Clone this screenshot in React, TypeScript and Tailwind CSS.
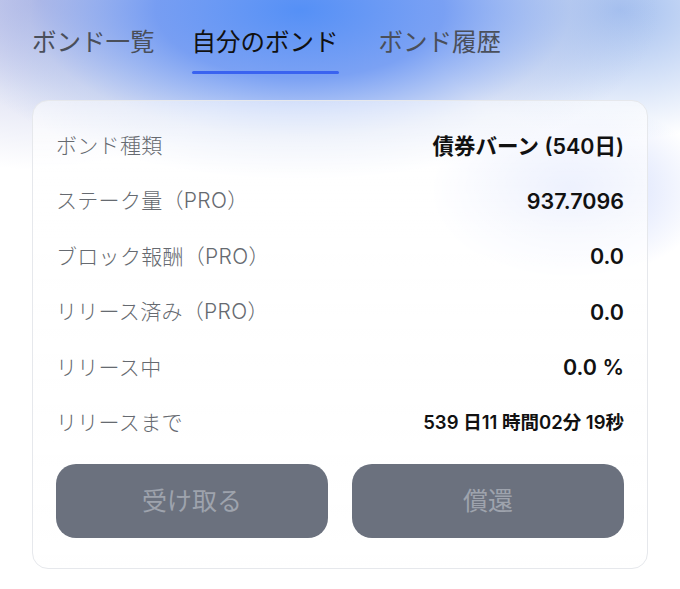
import React from "react";

const rows: { label: string; value: string; small?: boolean }[] = [
  { label: "ボンド種類", value: "債券バーン (540日)" },
  { label: "ステーク量（PRO）", value: "937.7096" },
  { label: "ブロック報酬（PRO）", value: "0.0" },
  { label: "リリース済み（PRO）", value: "0.0" },
  { label: "リリース中", value: "0.0 %" },
  { label: "リリースまで", value: "539 日11 時間02分 19秒", small: true },
];

export default function App() {
  return (
    <div
      className="w-[680px] h-[589px] overflow-hidden bg-white bg-[radial-gradient(ellipse_360px_170px_at_300px_10px,#5590f6_0%,rgba(100,145,242,0.85)_40%,rgba(170,190,235,0.45)_75%,rgba(255,255,255,0)_100%),radial-gradient(ellipse_230px_170px_at_40px_0px,#b4b6e4_0%,rgba(200,205,235,0.5)_55%,rgba(255,255,255,0)_100%),radial-gradient(ellipse_200px_130px_at_620px_10px,rgba(140,175,235,0.8)_0%,rgba(255,255,255,0)_100%),radial-gradient(ellipse_140px_90px_at_570px_190px,rgba(120,150,245,0.4)_0%,rgba(255,255,255,0)_100%)] flex flex-col"
      style={{ fontFamily: '"Inter", "Noto Sans CJK JP", sans-serif' }}
    >
      <div className="flex pl-[32px] pt-[22px] text-[24.5px] leading-[40px]">
        <div className="text-[#4a4f5a]">ボンド一覧</div>
        <div className="ml-[37px] flex flex-col items-stretch">
          <div className="text-[#111]">自分のボンド</div>
          <div className="mt-[9px] h-[3px] rounded-full bg-[#3a63f0]" />
        </div>
        <div className="ml-[40px] text-[#4a4f5a]">ボンド履歴</div>
      </div>
      <div className="mx-[32px] mt-[26px] rounded-[16px] border border-[#e6e8ec] bg-[linear-gradient(180deg,rgba(255,255,255,0.55)_0%,rgba(255,255,255,0.75)_30%,rgba(255,255,255,0.8)_100%)] px-[23px] pt-[17px] pb-[30px]">
        <div className="flex flex-col">
          {rows.map((r) => (
            <div key={r.label} className="flex items-center justify-between h-[55.4px]">
              <div className="text-[21px] text-[#666a70] font-light tracking-[0.3px]">{r.label}</div>
              <div
                className={
                  r.small
                    ? "text-[18.5px] font-semibold text-[#111]"
                    : "text-[21.5px] font-semibold text-[#111]"
                }
              >
                {r.value}
              </div>
            </div>
          ))}
        </div>
        <div className="mt-[14px] flex gap-[24px]">
          <button className="flex-1 h-[74px] rounded-[20px] bg-[#6b717e] text-[25px] text-[#9ea3ad]">
            受け取る
          </button>
          <button className="flex-1 h-[74px] rounded-[20px] bg-[#6b717e] text-[25px] text-[#9ea3ad]">
            償還
          </button>
        </div>
      </div>
    </div>
  );
}
